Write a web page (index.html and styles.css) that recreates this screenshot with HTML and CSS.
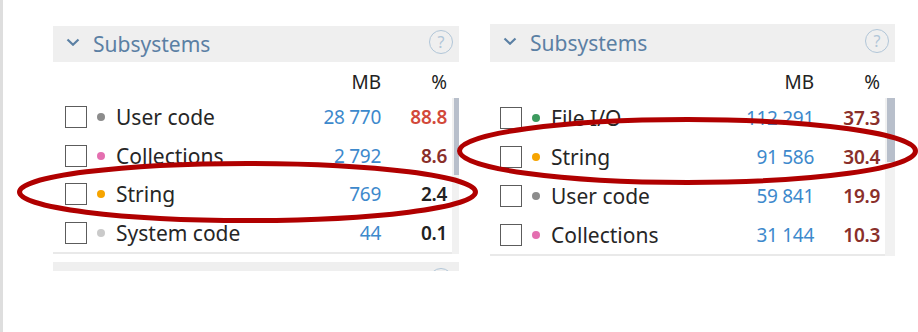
FILE: index.html
```html
<!DOCTYPE html>
<html lang="en">
<head>
    <meta charset="utf-8">
    <title>Subsystems</title>
    <link rel="stylesheet" href="styles.css">
</head>
<body>
    <div class="page">
        <section class="panel panel-left">
            <div class="panel-header">
                <svg class="chevron" width="14" height="8" viewBox="0 0 14 8"><path d="M1.5 1.5l5.5 5.2 5.5-5.2" /></svg>
                <span class="panel-title">Subsystems</span>
                <span class="help">?</span>
            </div>
            <div class="col-head">
                <span class="col-mb">MB</span>
                <span class="col-pct">%</span>
            </div>
            <div class="list">
                <div class="rows">
                    <div class="row">
                        <span class="check"></span><span class="dot dot-user"></span>
                        <span class="label">User code</span>
                        <span class="mb">28 770</span><span class="pct pct-hot">88.8</span>
                    </div>
                    <div class="row">
                        <span class="check"></span><span class="dot dot-coll"></span>
                        <span class="label">Collections</span>
                        <span class="mb">2 792</span><span class="pct pct-warm">8.6</span>
                    </div>
                    <div class="row">
                        <span class="check"></span><span class="dot dot-string"></span>
                        <span class="label">String</span>
                        <span class="mb">769</span><span class="pct">2.4</span>
                    </div>
                    <div class="row">
                        <span class="check"></span><span class="dot dot-sys"></span>
                        <span class="label">System code</span>
                        <span class="mb">44</span><span class="pct">0.1</span>
                    </div>
                </div>
                <div class="scrollbar"><div class="thumb"></div></div>
            </div>
            <!-- next section, cut off by the screenshot -->
            <div class="panel-next">
                <div class="panel-header">
                    <span class="help"></span>
                </div>
            </div>
        </section>

        <section class="panel panel-right">
            <div class="panel-header">
                <svg class="chevron" width="14" height="8" viewBox="0 0 14 8"><path d="M1.5 1.5l5.5 5.2 5.5-5.2" /></svg>
                <span class="panel-title">Subsystems</span>
                <span class="help">?</span>
            </div>
            <div class="col-head">
                <span class="col-mb">MB</span>
                <span class="col-pct">%</span>
            </div>
            <div class="list">
                <div class="rows">
                    <div class="row">
                        <span class="check"></span><span class="dot dot-file"></span>
                        <span class="label">File I/O</span>
                        <span class="mb">112 291</span><span class="pct pct-warm">37.3</span>
                    </div>
                    <div class="row">
                        <span class="check"></span><span class="dot dot-string"></span>
                        <span class="label">String</span>
                        <span class="mb">91 586</span><span class="pct pct-warm">30.4</span>
                    </div>
                    <div class="row">
                        <span class="check"></span><span class="dot dot-user"></span>
                        <span class="label">User code</span>
                        <span class="mb">59 841</span><span class="pct pct-warm">19.9</span>
                    </div>
                    <div class="row">
                        <span class="check"></span><span class="dot dot-coll"></span>
                        <span class="label">Collections</span>
                        <span class="mb">31 144</span><span class="pct pct-warm">10.3</span>
                    </div>
                </div>
                <div class="scrollbar"><div class="thumb"></div></div>
            </div>
        </section>
    </div>

    <svg class="marks" width="918" height="332" viewBox="0 0 918 332">
        <ellipse cx="247.5" cy="192" rx="228" ry="28.5" />
        <ellipse cx="687.5" cy="151" rx="228" ry="31.5" />
    </svg>
</body>
</html>
```

FILE: styles.css
```css
body {
    margin: 0;
    background: #fff;
    font-family: "Noto Sans", sans-serif;
    color: #222;
}

.page {
    display: flex;
    align-items: flex-start;
    height: 332px;
    box-sizing: border-box;
    border-left: 3px solid #dedede;
    overflow: hidden;
}

.panel {
    --row-h: 38.5px;
    --track: 7px;
    --thumb-w: 5px;
    --thumb-h: 77px;
    --check-left: 12px;
    width: 406px;
}

.panel-left {
    margin: 26px 0 0 50px;
}

.panel-right {
    --row-h: 39px;
    --track: 10px;
    --thumb-w: 8px;
    --thumb-h: 64px;
    --check-left: 10px;
    width: 405px;
    margin: 24px 0 0 31px;
}

.panel-right .panel-header {
    height: 38px;
}

/* header bar */

.panel-header {
    display: flex;
    align-items: center;
    height: 36px;
    padding: 0 6px 0 13px;
    background: #efefef;
}

.chevron {
    fill: none;
    stroke: #5b80a4;
    stroke-width: 2.2;
    margin-top: -5px;
}

.panel-title {
    margin-left: 13px;
    font-size: 21px;
    color: #5b80a4;
}

.help {
    display: flex;
    align-items: center;
    justify-content: center;
    width: 22px;
    height: 22px;
    margin: -5px 0 0 auto;
    border: 1.5px solid #b1c6d8;
    border-radius: 50%;
    font-size: 16px;
    color: #b1c6d8;
}

.panel-next {
    height: 9px;
    margin-top: 8px;
    overflow: hidden;
}

.panel-next .help {
    margin-top: 0;
}

/* columns */

.col-head {
    display: flex;
    justify-content: flex-end;
    height: 36px;
    padding: 4px calc(var(--track) + 5px) 0 0;
    box-sizing: border-box;
    align-items: center;
    font-size: 19px;
}

.col-mb {
    width: 90px;
    text-align: right;
}

.col-pct {
    width: 66px;
    text-align: right;
}

.list {
    display: flex;
}

.rows {
    flex: 1;
    padding-right: 5px;
    border-bottom: 2px solid #e9e9e9;
}

.row {
    display: flex;
    align-items: center;
    height: var(--row-h);
}

.check {
    width: 20px;
    height: 20px;
    margin-left: var(--check-left);
    border: 1.5px solid #5c5c5c;
}

.dot {
    width: 8px;
    height: 8px;
    margin-left: 10px;
    border-radius: 50%;
}

.dot-user { background: #8c8c8c; }
.dot-coll { background: #e46fb0; }
.dot-string { background: #f6a400; }
.dot-sys { background: #cacaca; }
.dot-file { background: #3c9a5e; }

.label {
    flex: 1;
    margin-left: 11px;
    font-size: 21px;
    color: #262626;
}

.mb {
    width: 90px;
    text-align: right;
    font-size: 19px;
    letter-spacing: -0.3px;
    color: #3d89cc;
}

.pct {
    width: 66px;
    text-align: right;
    font-size: 19px;
    font-weight: 600;
    letter-spacing: -0.3px;
    color: #222;
}

.pct-hot { color: #d2493a; }
.pct-warm { color: #8a2f2a; }

.scrollbar {
    display: flex;
    justify-content: flex-end;
    width: var(--track);
    background: #f1f1f1;
}

.thumb {
    width: var(--thumb-w);
    height: var(--thumb-h);
    background: #b8bfcb;
}

/* hand-drawn highlight rings over the screenshot */

.marks {
    position: absolute;
    top: 0;
    left: 0;
    pointer-events: none;
}

.marks ellipse {
    fill: none;
    stroke: #b00000;
    stroke-width: 5;
}
```
